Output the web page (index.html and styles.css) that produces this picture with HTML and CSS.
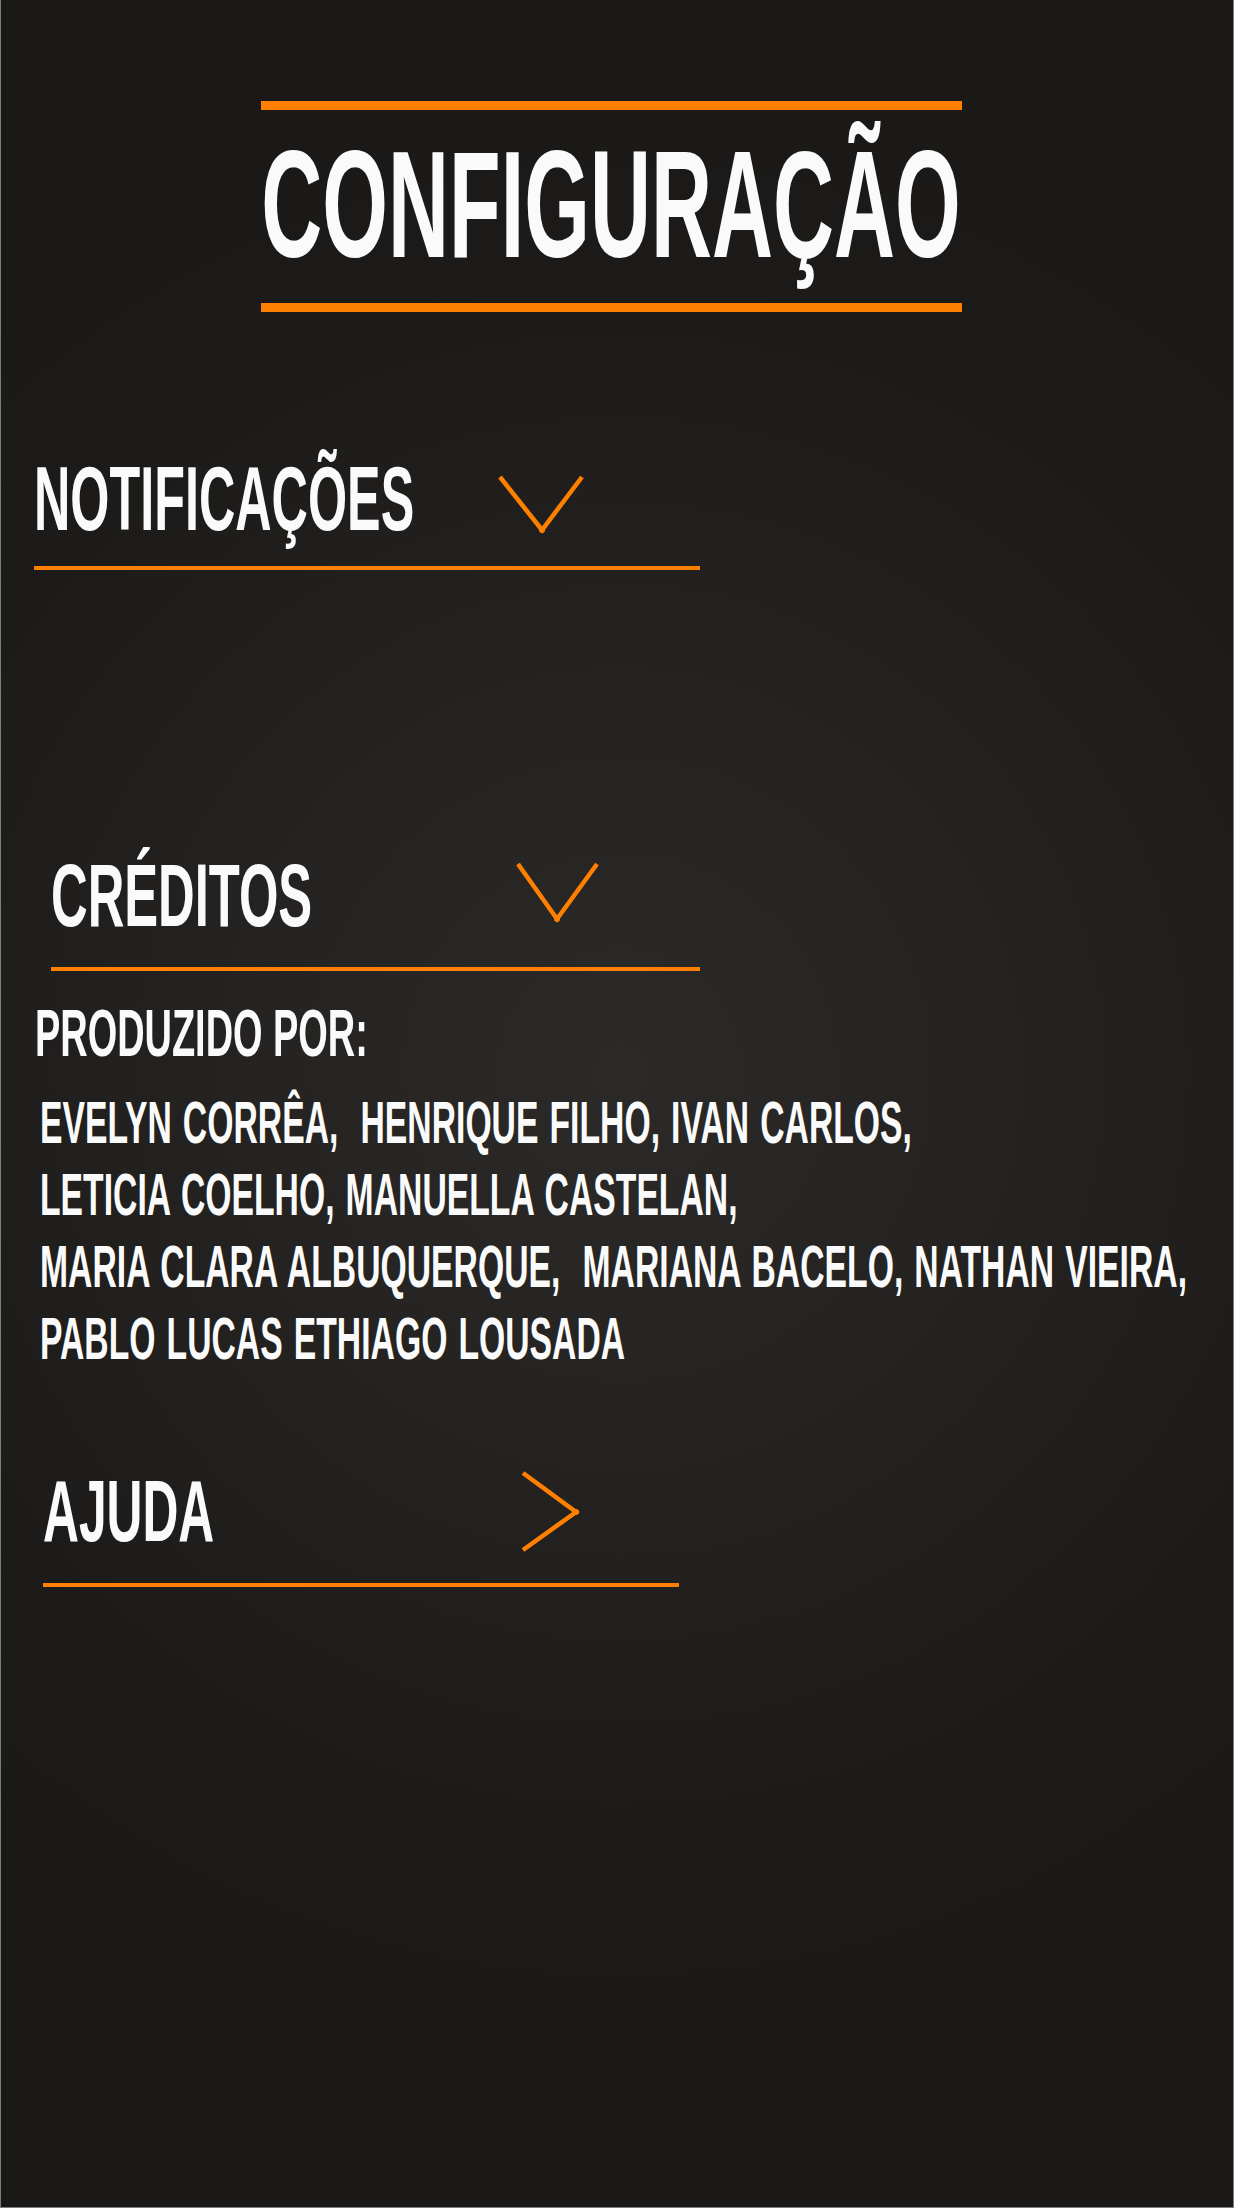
FILE: index.html
```html
<!DOCTYPE html>
<html lang="pt-BR">
<head>
<meta charset="utf-8">
<title>Configuração</title>
<link rel="stylesheet" href="styles.css">
</head>
<body>
<div class="screen">
  <header class="title-block">
    <h1 class="title">CONFIGURAÇÃO</h1>
  </header>

  <section class="item item-notif">
    <div class="item-head">
      <div class="label-box"><h2 class="label">NOTIFICAÇÕES</h2></div>
      <svg class="chev" width="88" height="60" viewBox="0 0 88 60" aria-hidden="true">
        <polyline points="3,3 45,56 85,3" />
        <circle cx="45" cy="56" r="3" />
      </svg>
    </div>
    <div class="rule"></div>
  </section>

  <section class="item item-cred">
    <div class="item-head">
      <div class="label-box"><h2 class="label">CRÉDITOS</h2></div>
      <svg class="chev" width="86" height="62" viewBox="0 0 86 62" aria-hidden="true">
        <polyline points="3,3 42,58 82,3" />
        <circle cx="42" cy="58" r="3" />
      </svg>
    </div>
    <div class="rule"></div>
  </section>

  <section class="credits">
    <p class="produced">PRODUZIDO POR:</p>
    <div class="names">
      <div class="name-line">EVELYN CORRÊA,  HENRIQUE FILHO, IVAN CARLOS,</div>
      <div class="name-line">LETICIA COELHO, MANUELLA CASTELAN,</div>
      <div class="name-line">MARIA CLARA ALBUQUERQUE,  MARIANA BACELO, NATHAN VIEIRA,</div>
      <div class="name-line">PABLO LUCAS ETHIAGO LOUSADA</div>
    </div>
  </section>

  <section class="item item-help">
    <div class="item-head">
      <div class="label-box"><h2 class="label">AJUDA</h2></div>
      <svg class="chev" width="62" height="84" viewBox="0 0 62 84" aria-hidden="true">
        <polyline points="3,3 56,42 3,80" />
        <circle cx="56" cy="42" r="3" />
      </svg>
    </div>
    <div class="rule"></div>
  </section>
</div>
</body>
</html>
```
FILE: styles.css
```css
* {
  box-sizing: border-box;
}

html, body {
  margin: 0;
  padding: 0;
  background: #1a1917;
}

.screen {
  width: 1234px;
  height: 2208px;
  overflow: hidden;
  padding-top: 101px;
  background: radial-gradient(circle at 620px 1070px, #2b2a28 0, #242321 380px, #1c1b19 760px, #1a1917 1000px);
  box-shadow: inset 1px 0 #7d7d7d, inset -1px 0 #7d7d7d, inset 0 -1px #7d7d7d;
  font-family: "Liberation Sans", Arial, sans-serif;
  font-weight: 700;
  color: #fafafa;
}

/* Title */
.title-block {
  margin-left: 261px;
  width: 701px;
  border-top: 9px solid #ff8000;
  border-bottom: 9px solid #ff8000;
  padding: 18px 0 23px;
  display: flex;
  justify-content: center;
}

.title {
  margin: 0;
  font-size: 152px;
  line-height: 152px;
  font-weight: 700;
  white-space: nowrap;
  transform: scaleX(0.556);
}

/* Collapsible rows */
.item-head {
  display: flex;
  align-items: flex-start;
}

.label-box {
  flex: none;
}

.label {
  display: block;
  width: max-content;
  margin: 0;
  font-weight: 700;
  white-space: nowrap;
  transform: scaleX(0.553);
  transform-origin: left center;
}

.chev {
  flex: none;
  display: block;
}

.chev polyline {
  fill: none;
  stroke: #ff8000;
  stroke-width: 4.5;
  stroke-linecap: butt;
  stroke-linejoin: miter;
}

.chev circle {
  fill: #ff8000;
}

.rule {
  height: 4px;
  background: #ff8000;
}

.item-notif {
  margin-top: 141px;
  margin-left: 34px;
}
.item-notif .label-box { width: 463px; }
.item-notif .label { font-size: 91px; line-height: 91px; }
.item-notif .chev { margin-top: 21px; }
.item-notif .rule { width: 666px; margin-top: 22px; }

.item-cred {
  margin-top: 281px;
  margin-left: 51px;
}
.item-cred .label-box { width: 464px; }
.item-cred .label { font-size: 89px; line-height: 89px; transform: scaleX(0.57); }
.item-cred .chev { margin-top: 10px; }
.item-cred .rule { width: 649px; margin-top: 27px; }

/* Credits text */
.credits {
  margin-top: 28px;
}

.produced {
  margin: 0 0 0 35px;
  width: max-content;
  font-size: 67px;
  line-height: 67px;
  white-space: nowrap;
  transform: scaleX(0.566);
  transform-origin: left center;
}

.names {
  margin: 21px 0 0 40px;
  width: max-content;
  font-size: 60px;
  line-height: 72px;
  word-spacing: 3px;
  transform: scaleX(0.562);
  transform-origin: left center;
}

.name-line {
  white-space: pre;
}

.item-help {
  margin-top: 92px;
  margin-left: 43px;
}
.item-help .label-box { width: 477px; }
.item-help .label { font-size: 88px; line-height: 88px; transform: scaleX(0.565); }
.item-help .chev { margin-top: 3px; }
.item-help .rule { width: 636px; margin-top: 28px; }
```
